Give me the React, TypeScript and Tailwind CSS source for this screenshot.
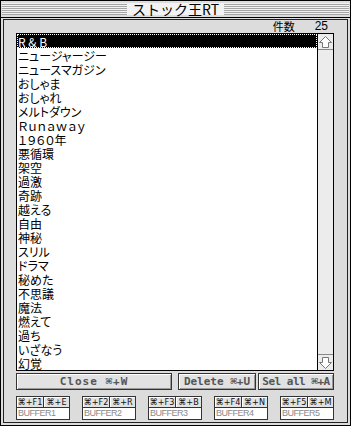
import React from "react";

const items = [
  "R & B",
  "ニュージャージー",
  "ニュースマガジン",
  "おしゃま",
  "おしゃれ",
  "メルトダウン",
  "Ｒｕｎａｗａｙ",
  "１９６０年",
  "悪循環",
  "架空",
  "過激",
  "奇跡",
  "越える",
  "自由",
  "神秘",
  "スリル",
  "ドラマ",
  "秘めた",
  "不思議",
  "魔法",
  "燃えて",
  "過ち",
  "いざなう",
  "幻覚",
];

const buffers = [
  ["⌘+F1", "⌘+E", "BUFFER1"],
  ["⌘+F2", "⌘+R", "BUFFER2"],
  ["⌘+F3", "⌘+B", "BUFFER3"],
  ["⌘+F4", "⌘+N", "BUFFER4"],
  ["⌘+F5", "⌘+M", "BUFFER5"],
];

const Arrow = ({ down }: { down?: boolean }) => (
  <svg width="13" height="12" viewBox="0 0 13 12" className={down ? "rotate-180" : ""}>
    <path
      d="M6.5 0.5 L12.5 6.5 L9.5 6.5 L9.5 11.5 L3.5 11.5 L3.5 6.5 L0.5 6.5 Z"
      fill="#ffffff"
      stroke="#777777"
      strokeWidth="1"
    />
  </svg>
);

const BigButton = ({ label, w, track }: { label: string; w: string; track: string }) => (
  <div
    className={`${w} h-[17px] flex items-center justify-center border border-[#333] bg-[#e2e2e2] shadow-[inset_1px_1px_0_#ffffff,inset_-1px_-1px_0_#9a9a9a] text-[11px] font-bold leading-none whitespace-nowrap text-[#555] ${track}`}
    style={{ fontFamily: '"DejaVu Sans Mono", monospace' }}
  >
    {label}
  </div>
);

const KeyCap = ({ label, w, first }: { label: string; w: string; first?: boolean }) => (
  <div
    className={`${w} border border-[#333] ${first ? "" : "border-l-0"} bg-[#e2e2e2] shadow-[inset_1px_1px_0_#ffffff] flex items-center justify-center text-[9px] leading-none whitespace-nowrap text-[#111]`}
    style={{ fontFamily: '"DejaVu Sans Condensed", "DejaVu Sans", sans-serif' }}
  >
    {label}
  </div>
);

export default function App() {
  return (
    <div
      className="w-[351px] h-[426px] border border-black bg-[#dcdcdc] flex flex-col"
      style={{ fontFamily: '"Noto Sans CJK JP", "DejaVu Sans", sans-serif' }}
    >
      {/* title bar */}
      <div className="h-[17px] border-b border-black flex items-center px-[1px] py-[2px]">
        <div className="flex-1 h-full bg-[repeating-linear-gradient(to_bottom,#f2f2f2_0px,#f2f2f2_1px,#a5a5a5_1px,#a5a5a5_2px)]" />
        <div className="px-[5px] h-full flex items-center bg-[#f2f2f2] text-[14px] leading-none text-black">
          ストック王RT
        </div>
        <div className="flex-1 h-full bg-[repeating-linear-gradient(to_bottom,#f2f2f2_0px,#f2f2f2_1px,#a5a5a5_1px,#a5a5a5_2px)]" />
      </div>

      {/* panel */}
      <div className="flex-1 mt-[1px] mb-[2px] mx-[2px] border border-[#222] bg-[#dcdcdc] flex flex-col pl-[12px] pr-[13px] pb-[2px]">
        <div className="h-[13px] flex items-center justify-end pr-[6px] text-[11px] leading-[13px] text-black">
          <span>件数</span>
          <span className="ml-[20px]" style={{ fontFamily: '"Liberation Sans", sans-serif', fontSize: 12 }}>
            25
          </span>
        </div>

        {/* list */}
        <div className="h-[338px] border border-black bg-white flex">
          <div className="flex-1 flex flex-col overflow-hidden">
            {items.map((t, i) => (
              <div
                key={i}
                className={`h-[14px] shrink-0 text-[12px] leading-[12px] whitespace-nowrap [font-feature-settings:'palt'] ${
                  i === 0
                    ? "bg-black text-white border border-dotted border-white pt-[1px] pl-0"
                    : "text-black pt-[2px] pl-[1px]"
                }`}
              >
                {t}
              </div>
            ))}
          </div>
          <div className="w-[16px] border-l border-black bg-[#ececec] flex flex-col justify-between">
            <div className="h-[16px] border-b border-[#888] flex items-center justify-center">
              <Arrow />
            </div>
            <div className="h-[16px] border-t border-[#888] flex items-center justify-center">
              <Arrow down />
            </div>
          </div>
        </div>

        {/* buttons */}
        <div className="mt-[2px] flex">
          <BigButton label="Close ⌘+W" w="w-[156px]" track="tracking-[1px]" />
          <div className="w-[6px]" />
          <BigButton label="Delete ⌘+U" w="w-[78px]" track="tracking-[0px]" />
          <div className="w-[2px]" />
          <BigButton label="Sel all ⌘+A" w="w-[76px]" track="tracking-[-0.5px]" />
        </div>

        {/* buffers */}
        <div className="mt-[6px] flex justify-between">
          {buffers.map(([a, b, name]) => (
            <div key={name} className="w-[54px] flex flex-col">
              <div className="h-[12px] flex">
                <KeyCap label={a} w="w-[28px]" first />
                <KeyCap label={b} w="w-[26px]" />
              </div>
              <div
                className="h-[12px] border border-[#333] border-t-0 bg-white flex items-center pl-[1px] text-[9px] leading-none tracking-[-0.5px] text-[#8a8a8a]"
                style={{ fontFamily: '"Liberation Sans", sans-serif' }}
              >
                {name}
              </div>
            </div>
          ))}
        </div>
      </div>
    </div>
  );
}
